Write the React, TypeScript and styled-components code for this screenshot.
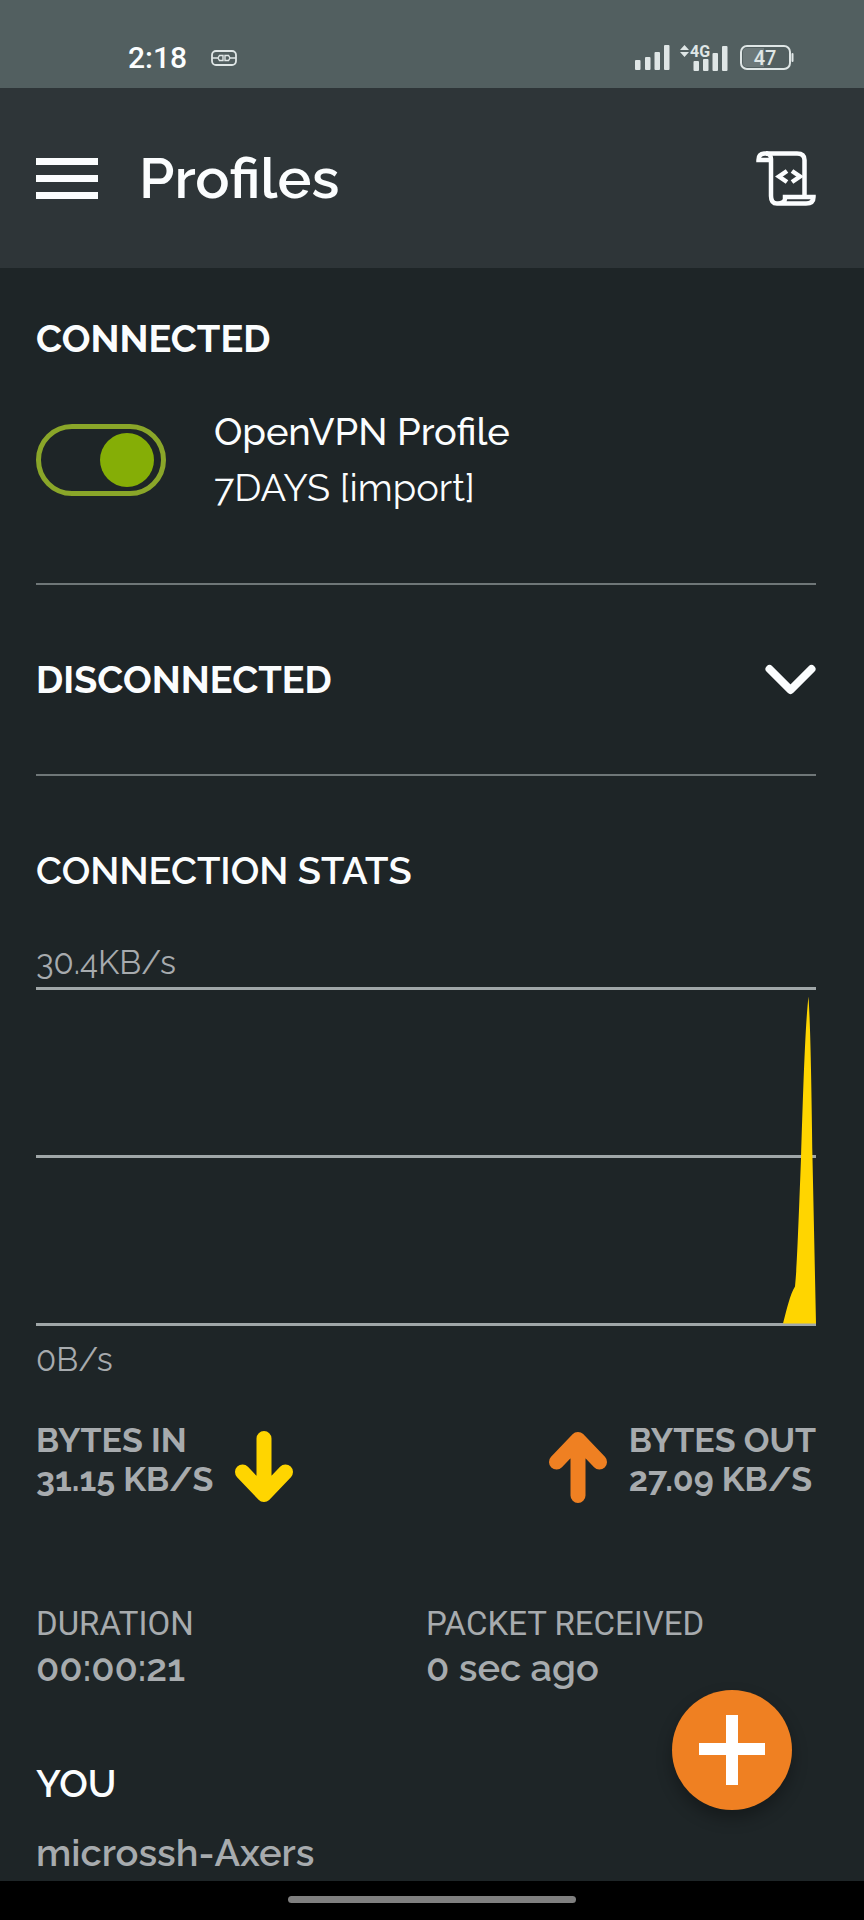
import React, { useState } from "react";
import styled, { createGlobalStyle } from "styled-components";

const color = {
  page: "#1e2527",
  header: "#2e3538",
  status: "#525f60",
  text: "#fbfdfe",
  muted: "#a7abae",
  divider: "#6f7778",
  grid: "#a0a7a8",
  green: "#85ae06",
  greenRing: "#8aa629",
  yellow: "#ffd500",
  orange: "#ef8022",
  statusIcon: "#dfe6e6",
};

const GlobalStyle = createGlobalStyle`
  *, *::before, *::after { box-sizing: border-box; }
  body {
    margin: 0;
    background: ${color.page};
    color: ${color.text};
    font-family: Raleway, Lato, sans-serif;
  }
  h1, h2, p, dl, dt, dd { margin: 0; }
  button { border: 0; padding: 0; background: none; color: inherit; font: inherit; cursor: pointer; }
  svg { display: block; }
`;

const Screen = styled.div`
  position: relative;
  display: flex;
  flex-direction: column;
  min-height: 100vh;
`;

const StatusBar = styled.div`
  display: flex;
  justify-content: space-between;
  align-items: center;
  height: 88px;
  padding: 28px 70px 0 128px;
  background: ${color.status};
`;

const StatusGroup = styled.div<{ $gap: number }>`
  display: flex;
  align-items: center;
  gap: ${(p) => p.$gap}px;
`;

const Clock = styled.time`
  font: 500 30px/32px Roboto, sans-serif;
`;

const Header = styled.header`
  display: flex;
  align-items: center;
  height: 180px;
  padding: 0 48px 0 36px;
  background: ${color.header};
`;

const Title = styled.h1`
  flex: 1;
  margin-left: 41px;
  font-size: 57px;
  font-weight: 600;
  line-height: 72px;
`;

const MenuButton = styled.button`
  display: flex;
  flex-direction: column;
  gap: 10px;
  width: 62px;
`;

const MenuBar = styled.span`
  height: 7px;
  background: ${color.text};
`;

const Main = styled.main`
  flex: 1;
  padding: 47px 48px 0 36px;
`;

const Heading = styled.h2<{ $weight: number }>`
  font-size: 38px;
  font-weight: ${(p) => p.$weight};
  line-height: 48px;
`;

const ProfileRow = styled.div`
  display: flex;
  align-items: center;
  gap: 48px;
  padding: 41px 0 67px;
`;

const Switch = styled.input`
  appearance: none;
  display: flex;
  align-items: center;
  justify-content: flex-start;
  width: 130px;
  height: 72px;
  margin: 0;
  padding: 0 7px;
  border: 5px solid ${color.greenRing};
  border-radius: 36px;
  cursor: pointer;

  &::before {
    content: "";
    width: 54px;
    height: 54px;
    border-radius: 50%;
    background: ${color.green};
  }
  &:checked {
    justify-content: flex-end;
  }
`;

const ProfileLabel = styled.label`
  display: flex;
  flex-direction: column;
  font-size: 38px;
  line-height: 56px;
`;

const ProfileLine = styled.span<{ $weight: number }>`
  font-weight: ${(p) => p.$weight};
`;

const Divider = styled.hr`
  height: 2px;
  margin: 0;
  border: 0;
  background: ${color.divider};
`;

const SectionToggle = styled.button`
  display: flex;
  align-items: center;
  justify-content: space-between;
  width: 100%;
  height: 189px;
`;

const Stats = styled.section`
  padding-top: 71px;
`;

const AxisLabel = styled.p`
  color: ${color.muted};
  font-size: 33px;
  font-weight: 400;
  line-height: 40px;
`;

const Chart = styled.figure`
  margin: 48px 0 41px;
`;

const Plot = styled.div`
  position: relative;
  display: flex;
  flex-direction: column;
  justify-content: space-between;
  height: 339px;
  margin: 4px 0 14px;
`;

const GridLine = styled.span`
  height: 3px;
  background: ${color.grid};
`;

const Spike = styled.svg`
  position: absolute;
  right: 0;
  bottom: 2px;
`;

const TrafficRow = styled.div`
  display: flex;
  justify-content: space-between;
`;

const Traffic = styled.div`
  display: flex;
  align-items: flex-end;
  gap: 22px;
`;

const TrafficText = styled.p`
  align-self: flex-start;
  color: ${color.muted};
  font-size: 34px;
  font-weight: 700;
  line-height: 39px;
`;

const ArrowIcon = styled.svg`
  margin-top: 10px;
`;

const Facts = styled.dl`
  display: grid;
  grid-template-columns: 1fr 1fr;
  padding: 99px 0 70px;
  color: ${color.muted};
  line-height: 44px;
`;

const FactName = styled.dt`
  font-family: Roboto, sans-serif;
  font-size: 33px;
`;

const FactValue = styled.dd`
  font-size: 38px;
  font-weight: 600;
`;

const UserName = styled.p`
  margin-top: 21px;
  color: ${color.muted};
  font-size: 38px;
  font-weight: 600;
  line-height: 48px;
`;

const AddButton = styled.button`
  position: absolute;
  right: 72px;
  bottom: 110px;
  display: grid;
  place-items: center;
  width: 120px;
  height: 120px;
  border-radius: 50%;
  background: ${color.orange};
  box-shadow: 0 8px 16px rgba(0, 0, 0, 0.3);
`;

const NavBar = styled.div`
  display: flex;
  justify-content: center;
  height: 39px;
  padding-top: 15px;
  background: #000;
`;

const NavHandle = styled.span`
  width: 33.3333%;
  height: 7px;
  border-radius: 4px;
  background: #7f7f7f;
`;

const VpnIcon = () => (
  <svg width="26" height="16" viewBox="0 0 26 16" fill="none" stroke={color.statusIcon} aria-hidden="true">
    <rect x="1" y="1" width="24" height="14" rx="4" strokeWidth="1.8" />
    <path d="M1 8h6M19 8h6M12 5.5H8.500L7 8l1.500 2.500H12zM14 5.500h3.500L19 8l-1.500 2.500H14z" strokeWidth="1.4" />
  </svg>
);

const SignalIcon = () => (
  <svg width="35" height="26" viewBox="0 0 35 26" fill={color.statusIcon} aria-hidden="true">
    <rect x="0" y="15" width="5.500" height="10" rx="1" />
    <rect x="10" y="12" width="5.500" height="13" rx="1" />
    <rect x="19.500" y="7" width="5.500" height="18" rx="1" />
    <rect x="29" y="0" width="5.500" height="25" rx="1" />
  </svg>
);

const MobileDataIcon = () => (
  <svg width="50" height="36" viewBox="0 -4 50 36" fill={color.statusIcon} aria-hidden="true">
    <path d="M4.500 1L9 6H0zM4.500 13L9 8H0z" />
    <text x="10" y="13" fontFamily="Roboto, sans-serif" fontSize="16" fontWeight="700">4G</text>
    <rect x="13.500" y="17" width="5.500" height="10" rx="1" />
    <rect x="23" y="15" width="5.500" height="12" rx="1" />
    <rect x="32.500" y="9" width="5.500" height="18" rx="1" />
    <rect x="42" y="2" width="5.500" height="25" rx="1" />
  </svg>
);

const BatteryIcon = () => (
  <svg width="54" height="26" viewBox="0 0 54 26" role="img" aria-label="Battery 47%">
    <rect x="1" y="1" width="49" height="23" rx="6" fill="none" stroke={color.statusIcon} strokeWidth="2" />
    <path d="M7 3H24V22H7Q3 22 3 18V7Q3 3 7 3Z" fill="#6c7879" />
    <rect x="51.500" y="8" width="2" height="9" rx="1" fill={color.statusIcon} />
    <text x="25" y="20" textAnchor="middle" fontFamily="Roboto, sans-serif" fontSize="20" fontWeight="500" fill={color.statusIcon}>47</text>
  </svg>
);

const ScriptIcon = () => (
  <svg width="60" height="55" viewBox="6 11 60 55" fill="none" stroke={color.text} strokeWidth="4.500" aria-hidden="true">
    <path d="M18 13.500H15C10 13.500 8.500 16 8.500 20H21" />
    <path d="M16 13.500H47C52 13.500 54.500 16 54.500 20V56" />
    <path d="M16 13.500C19.500 13.500 21 16 21 19V56C21 61 23 63.500 27 63.500H56C61 63.500 63.500 61 63.500 57H35V59C35 61 32 63.500 28 63.500" />
    <path d="M37 31L29 36.500L37 42M42 31L50 36.500L42 42" />
  </svg>
);

const ChevronIcon = ({ open }: { open: boolean }) => (
  <svg width="51" height="32" viewBox="0 0 51 32" fill="none" stroke={color.text} strokeWidth="8" strokeLinecap="round" strokeLinejoin="round" aria-hidden="true">
    <path d={open ? "M4.500 27L25.500 6L46.500 27" : "M4.500 5L25.500 26L46.500 5"} />
  </svg>
);

const Arrow = ({ up }: { up?: boolean }) => (
  <ArrowIcon width="58" height="72" viewBox="0 0 58 72" fill="none" stroke={up ? color.orange : color.yellow} strokeWidth="15" strokeLinecap="round" strokeLinejoin="round" aria-hidden="true">
    <path d={up ? "M29 64.500V10M7.500 31L29 8.500L50.500 31" : "M29 7.500V62M7.500 41L29 63.500L50.500 41"} />
  </ArrowIcon>
);

const PlusIcon = () => (
  <svg width="66" height="70" viewBox="0 0 66 70" fill="none" stroke="#fff" strokeWidth="12" aria-hidden="true">
    <path d="M0 34H66M33 0V70" />
  </svg>
);

export default function App() {
  const [connected, setConnected] = useState(true);
  const [open, setOpen] = useState(false);

  return (
    <Screen>
      <GlobalStyle />
      <StatusBar>
        <StatusGroup $gap={24}>
          <Clock>2:18</Clock>
          <VpnIcon />
        </StatusGroup>
        <StatusGroup $gap={10}>
          <SignalIcon />
          <MobileDataIcon />
          <BatteryIcon />
        </StatusGroup>
      </StatusBar>
      <Header>
        <MenuButton aria-label="Menu">
          <MenuBar />
          <MenuBar />
          <MenuBar />
        </MenuButton>
        <Title>Profiles</Title>
        <button aria-label="Log file">
          <ScriptIcon />
        </button>
      </Header>
      <Main>
        <Heading $weight={700}>CONNECTED</Heading>
        <ProfileRow>
          <Switch
            type="checkbox"
            role="switch"
            id="profile"
            checked={connected}
            onChange={(e) => setConnected(e.target.checked)}
          />
          <ProfileLabel htmlFor="profile">
            <ProfileLine $weight={500}>OpenVPN Profile</ProfileLine>
            <ProfileLine $weight={400}>7DAYS [import]</ProfileLine>
          </ProfileLabel>
        </ProfileRow>
        <Divider />
        <SectionToggle aria-expanded={open} onClick={() => setOpen(!open)}>
          <Heading as="span" $weight={700}>DISCONNECTED</Heading>
          <ChevronIcon open={open} />
        </SectionToggle>
        <Divider />
        <Stats>
          <Heading $weight={600}>CONNECTION STATS</Heading>
          <Chart>
            <AxisLabel>30.4KB/s</AxisLabel>
            <Plot>
              <GridLine />
              <GridLine />
              <GridLine />
              <Spike width="33" height="328" viewBox="0 0 33 327" fill={color.yellow} aria-hidden="true">
                <path d="M0 327C4 312 7 298 12 290C14 270 15 240 18 162C20 100 22 30 25.500 0C27.500 30 28.500 90 29.500 162L33 327Z" />
              </Spike>
            </Plot>
            <AxisLabel>0B/s</AxisLabel>
          </Chart>
          <TrafficRow>
            <Traffic>
              <TrafficText>BYTES IN<br />31.15 KB/S</TrafficText>
              <Arrow />
            </Traffic>
            <Traffic>
              <Arrow up />
              <TrafficText>BYTES OUT<br />27.09 KB/S</TrafficText>
            </Traffic>
          </TrafficRow>
          <Facts>
            <div>
              <FactName>DURATION</FactName>
              <FactValue>00:00:21</FactValue>
            </div>
            <div>
              <FactName>PACKET RECEIVED</FactName>
              <FactValue>0 sec ago</FactValue>
            </div>
          </Facts>
        </Stats>
        <Heading $weight={600}>YOU</Heading>
        <UserName>microssh-Axers</UserName>
      </Main>
      <AddButton aria-label="Add profile">
        <PlusIcon />
      </AddButton>
      <NavBar>
        <NavHandle />
      </NavBar>
    </Screen>
  );
}
